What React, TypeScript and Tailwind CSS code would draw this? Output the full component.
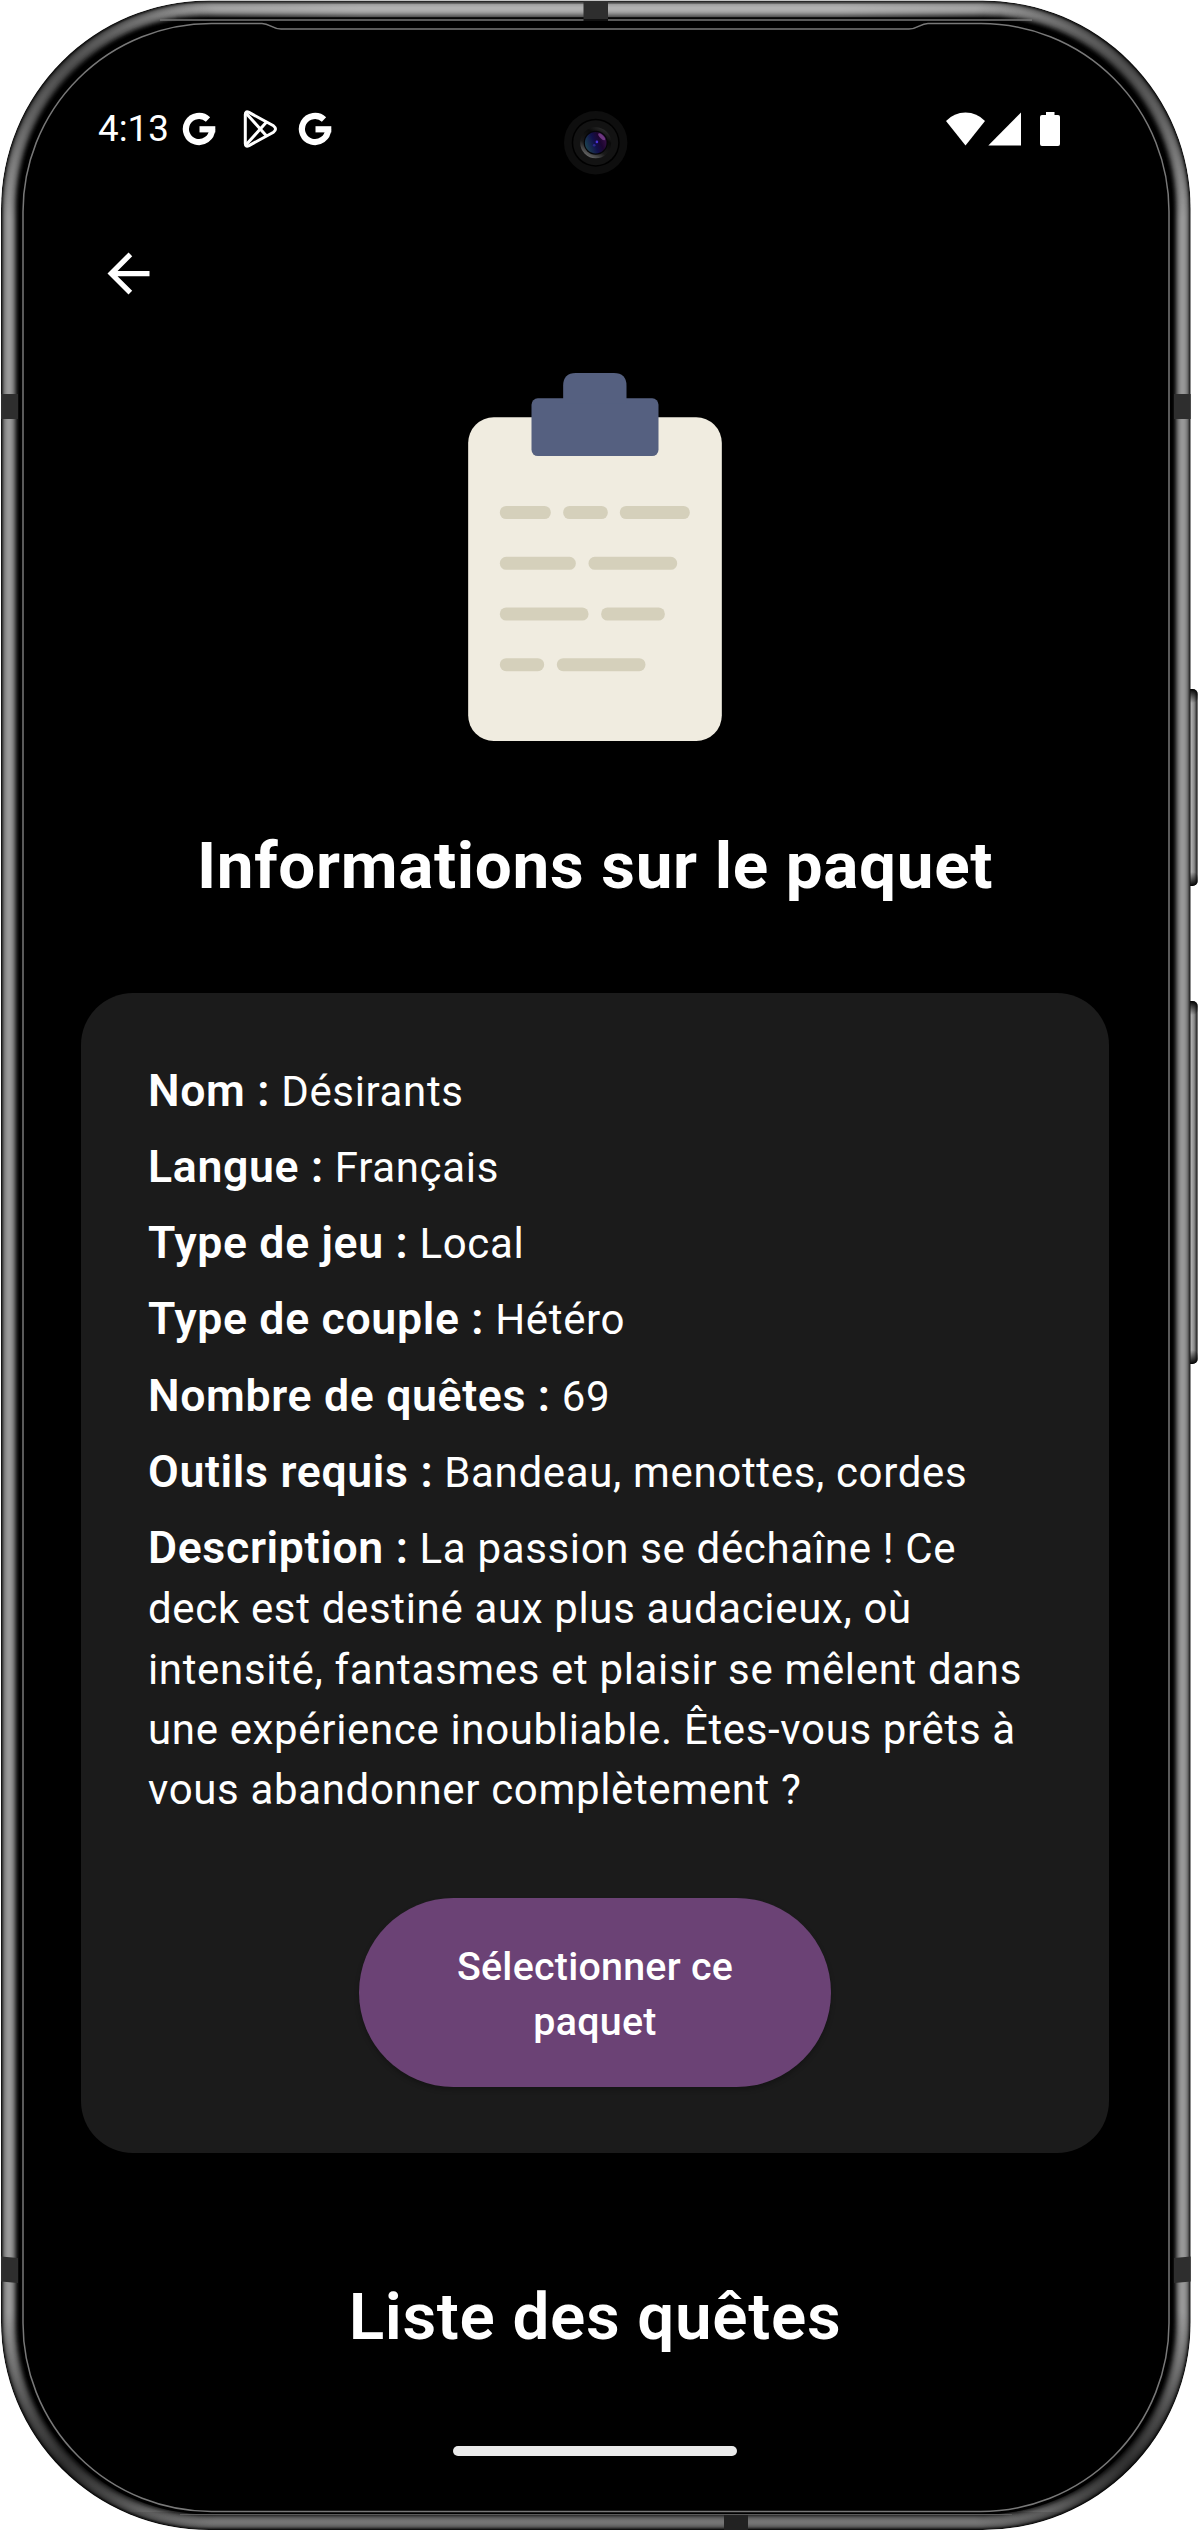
import { ReactNode } from 'react';

const PROFILE = [
  '#161616', '#3a3a3a', '#5c5c5c', '#767676', '#858585', '#8f8f8f', '#969696', '#999999', '#999999',
  '#959595', '#8d8d8d', '#828282', '#727272', '#5c5c5c', '#444444', '#2c2c2c', '#181818', '#0a0a0a', '#000000',
];

const CORNERS = [
  { x: 60, y: 62, o: 0.5 },
  { x: 1131, y: 62, o: 0.5 },
  { x: 60, y: 2468, o: 0.7 },
  { x: 1131, y: 2468, o: 0.7 },
];

function PhoneFrame() {
  return (
    <svg className="absolute inset-0" width="1198" height="2531" viewBox="0 0 1198 2531" aria-hidden="true">
      <defs>
        <linearGradient id="key" x1="0" x2="1" y1="0" y2="0">
          <stop offset="0" stopColor="#777" />
          <stop offset="0.5" stopColor="#b4b4b4" />
          <stop offset="0.75" stopColor="#8a8a8a" />
          <stop offset="1" stopColor="#111" />
        </linearGradient>
        <linearGradient id="keyEnds" x1="0" x2="0" y1="0" y2="1">
          <stop offset="0" stopColor="#000" />
          <stop offset="1" stopColor="#000" stopOpacity="0" />
        </linearGradient>
        <linearGradient id="keyEndsUp" x1="0" x2="0" y1="1" y2="0">
          <stop offset="0" stopColor="#000" />
          <stop offset="1" stopColor="#000" stopOpacity="0" />
        </linearGradient>
        <radialGradient id="corner">
          <stop offset="0" stopColor="#000" stopOpacity="1" />
          <stop offset="0.35" stopColor="#000" stopOpacity="0.75" />
          <stop offset="1" stopColor="#000" stopOpacity="0" />
        </radialGradient>
        <linearGradient id="topLight" x1="0" x2="1" y1="0" y2="0">
          <stop offset="0.12" stopColor="#fff" stopOpacity="0" />
          <stop offset="0.3" stopColor="#fff" stopOpacity="0.24" />
          <stop offset="0.7" stopColor="#fff" stopOpacity="0.24" />
          <stop offset="0.88" stopColor="#fff" stopOpacity="0" />
        </linearGradient>
        <linearGradient id="bottomShade" x1="0" x2="1" y1="0" y2="0">
          <stop offset="0.06" stopColor="#000" stopOpacity="0" />
          <stop offset="0.18" stopColor="#000" stopOpacity="0.24" />
          <stop offset="0.82" stopColor="#000" stopOpacity="0.24" />
          <stop offset="0.94" stopColor="#000" stopOpacity="0" />
        </linearGradient>
        <linearGradient id="lens" x1="0" x2="1" y1="0.7" y2="0.3">
          <stop offset="0" stopColor="#1d4650" />
          <stop offset="0.45" stopColor="#11104a" />
          <stop offset="0.7" stopColor="#1c0630" />
          <stop offset="1" stopColor="#3a1048" />
        </linearGradient>
        <linearGradient id="bezel" x1="0.2" x2="0.8" y1="1" y2="0">
          <stop offset="0" stopColor="#777" />
          <stop offset="0.35" stopColor="#1a1a1a" />
          <stop offset="0.7" stopColor="#0a0a0a" />
          <stop offset="1" stopColor="#333" />
        </linearGradient>
        <clipPath id="body">
          <rect x="1" y="0.5" width="1189.7" height="2529.5" rx="208" />
        </clipPath>
      </defs>

      {/* power and volume keys */}
      {[[689, 197], [1001, 363]].map(([y, h]) => (
        <g key={y}>
          <rect x="1184" y={y} width="13.6" height={h} rx="5" fill="url(#key)" />
          <rect x="1184" y={y} width="13.6" height="14" rx="5" fill="url(#keyEnds)" />
          <rect x="1184" y={y + h - 14} width="13.6" height="14" rx="5" fill="url(#keyEndsUp)" />
        </g>
      ))}

      {/* metal rim, built from the outside inwards */}
      <g clipPath="url(#body)">
        {PROFILE.map((c, i) => (
          <rect key={i} x={1 + i} y={0.5 + i} width={1189.7 - 2 * i} height={2529.5 - 2 * i} rx={208 - i} fill={c} />
        ))}
        <rect x="0" y="4" width="1198" height="13" fill="url(#topLight)" />
        <rect x="0" y="2512" width="1198" height="19" fill="url(#bottomShade)" />
        {CORNERS.map((c) => (
          <circle key={`${c.x}-${c.y}`} cx={c.x} cy={c.y} r="165" fill="url(#corner)" opacity={c.o} />
        ))}
        <g fill="#2e2e2e">
          <rect x="1" y="394" width="17" height="25" />
          <rect x="1174" y="394" width="17" height="25" />
          <path d="M1 2256.500l17 1.500v25l-17-1.500zM1191 2256.500l-17 1.500v25l17-1.500z" />
          <rect x="583.500" y="1" width="24.500" height="19" />
          <rect x="724" y="2513" width="24" height="17" fill="#222" />
        </g>
      </g>

      {/* glass */}
      <rect x="20" y="19.500" width="1152" height="2495" rx="189" fill="#000" />
      <path d="M160 20H1032" stroke="#777" strokeWidth="1.300" />
      <path d="M180 2514.500H1012" stroke="#5a5a5a" strokeWidth="1" />
      <path d="M583.500 20H608" stroke="#111" strokeWidth="2" />
      <path
        d="M23 212A188.500 188.500 0 0 1 211.500 23.500H262C270 23.500 272 29 281 29H909C918 29 920 23.500 928 23.500H981A188 188 0 0 1 1169 212V2323A188.500 188.500 0 0 1 980.500 2511.500H211.500A188.500 188.500 0 0 1 23 2323Z"
        fill="#000"
        stroke="#787878"
        strokeWidth="1.500"
      />

      {/* front camera */}
      <g transform="translate(595.700 142.700)">
        <circle r="31.700" fill="#0e0e0e" />
        <circle r="24" fill="#000" />
        <circle r="22.500" fill="#131313" />
        <circle r="15.500" fill="url(#bezel)" />
        <circle r="12" fill="#050508" />
        <circle r="10.800" fill="url(#lens)" />
        <ellipse cx="6" cy="-6" rx="4.500" ry="1.800" fill="#8a4a9c" opacity="0.7" transform="rotate(45 6 -6)" />
        <circle cx="1.200" cy="-0.800" r="1.300" fill="#4a34d8" />
        <circle cx="-1.500" cy="2.500" r="1.300" fill="#2a268a" />
      </g>
    </svg>
  );
}

function GoogleG() {
  return (
    <svg width="34" height="34" viewBox="-17 -17 34 34" fill="none" stroke="#fff" strokeWidth="6.200" aria-hidden="true">
      <path d="M9 -9.500A13.100 13.100 0 1 0 13.100 0.500" />
      <path d="M0.500 0.300H16.300" />
    </svg>
  );
}

function PlayGlyph() {
  return (
    <svg width="36" height="38" viewBox="0 0 36 38" fill="none" stroke="#fff" strokeWidth="3" strokeLinejoin="round" aria-hidden="true">
      <path d="M2.300 4.500V33.500Q2.300 37.500 6 35.600L30.500 22.200Q34.500 19 30.500 15.800L6 2.400Q2.300 0.500 2.300 4.500Z" />
      <path d="M3.300 3.500L24 26.500M3.300 34.500L24 11.500" />
    </svg>
  );
}

function Clipboard() {
  const bars = [
    [180, 468, 153], [370, 468, 134], [540, 468, 210],
    [180, 620.5, 228], [446, 620.5, 266],
    [180, 772.5, 266], [484, 772.5, 191],
    [180, 924.5, 133], [351, 924.5, 266],
  ];
  return (
    <svg className="mx-auto mt-[68px] block" width="254" height="368" viewBox="84.500 69 762 1104" aria-hidden="true">
      <rect x="85" y="202" width="761" height="971" rx="77" fill="#f0ece0" />
      <rect x="275" y="145" width="381" height="173" rx="19" fill="#556080" />
      <path d="M370 160V107Q370 69 408 69H522Q560 69 560 107V160Z" fill="#556080" />
      {bars.map(([x, y, w]) => (
        <rect key={`${x}-${y}`} x={x} y={y} width={w} height="39" rx="19" fill="#d5d0bb" />
      ))}
    </svg>
  );
}

function Row({ label, children }: { label: string; children: ReactNode }) {
  return (
    <p className="text-[42px] leading-[60.375px] tracking-[0.656px] whitespace-nowrap">
      <strong className="text-[44.625px] leading-none font-semibold">{label} :</strong> {children}
    </p>
  );
}

export default function App() {
  return (
    <div className="relative h-[2531px] w-[1198px] overflow-hidden bg-white font-[Roboto,sans-serif] text-white">
      <PhoneFrame />
      <main className="relative flex h-full w-[1190px] flex-col pt-[104px]">
        <header className="flex h-[50px] shrink-0 items-center pr-[130px] pl-[98px]">
          <span className="self-start text-[36.750px] leading-[49px]">4:13</span>
          <div className="ml-[13px] flex items-center">
            <GoogleG />
            <div className="ml-[27px]"><PlayGlyph /></div>
            <div className="ml-[19px]"><GoogleG /></div>
          </div>
          <div className="ml-auto flex items-center">
            <svg width="39" height="34" viewBox="0 0 39 34" fill="#fff" aria-hidden="true">
              <path d="M19.500 33.500L0 9Q8 0.500 19.500 0.500T39 9Z" />
            </svg>
            <svg className="ml-[3px]" width="33" height="34" viewBox="0 0 33 34" fill="#fff" aria-hidden="true">
              <path d="M33 0.500V33.500H0.300Z" />
            </svg>
            <svg className="ml-[19px]" width="20" height="34" viewBox="0 0 20 34" fill="#fff" aria-hidden="true">
              <path d="M6 0H14.500V3H18Q20 3 20 5V32Q20 34 18 34H2Q0 34 0 32V5Q0 3 2 3H6Z" />
            </svg>
          </div>
        </header>

        <button className="mt-[88px] ml-[97px] size-[63px]" aria-label="Retour">
          <svg viewBox="0 0 24 24" fill="#fff" className="size-full">
            <path d="M20 11H7.830l5.590-5.590L12 4l-8 8 8 8 1.410-1.410L7.830 13H20v-2z" />
          </svg>
        </button>

        <Clipboard />

        <h1 className="mt-[85px] text-center text-[65.625px] leading-[80px] font-bold tracking-[0.656px]">
          Informations sur le paquet
        </h1>

        <section className="mt-[87px] mr-[81px] ml-[81px] flex h-[1160px] shrink-0 flex-col rounded-[52px] bg-[#1b1b1b] pt-[69px] pl-[67px]">
          <div className="flex flex-col gap-[15.750px]">
            <Row label="Nom">Désirants</Row>
            <Row label="Langue">Français</Row>
            <Row label="Type de jeu">Local</Row>
            <Row label="Type de couple">Hétéro</Row>
            <Row label="Nombre de quêtes">69</Row>
            <Row label="Outils requis">Bandeau, menottes, cordes</Row>
            <Row label="Description">
              La passion se déchaîne ! Ce
              <br />
              deck est destiné aux plus audacieux, où
              <br />
              intensité, fantasmes et plaisir se mêlent dans
              <br />
              une expérience inoubliable. Êtes-vous prêts à
              <br />
              vous abandonner complètement ?
            </Row>
          </div>
          <button className="mt-auto mb-[66px] ml-[211px] flex h-[189px] w-[472px] items-center justify-center rounded-full bg-[#6b4275] pt-[2px] text-center text-[39.375px] leading-[55px] font-medium tracking-[0.260px] shadow-[0_3px_5px_rgba(0,0,0,0.25)]">
            <span>
              Sélectionner ce
              <br />
              paquet
            </span>
          </button>
        </section>

        <h2 className="mt-[124px] text-center text-[65.625px] leading-[80px] font-semibold tracking-[0.656px]">
          Liste des quêtes
        </h2>
        <div className="mx-auto mt-[89px] h-[10px] w-[284px] rounded-full bg-[#eaeaea]" />
      </main>
    </div>
  );
}
